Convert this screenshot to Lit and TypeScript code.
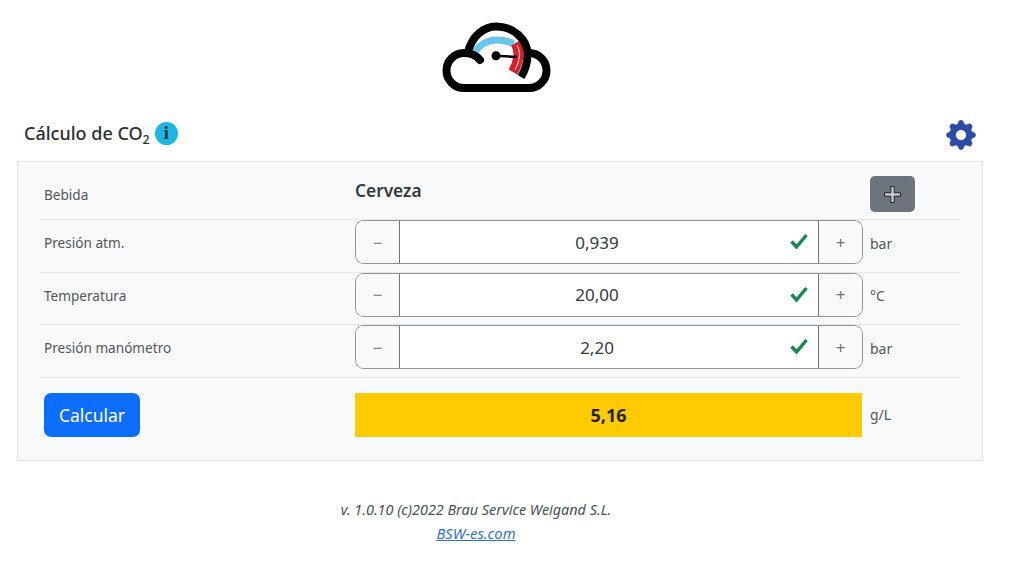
import { LitElement, html, css } from "lit";
import { customElement } from "lit/decorators.js";

const GEAR = "M9.405 1.05c-.413-1.4-2.397-1.4-2.81 0l-.1.34a1.464 1.464 0 0 1-2.105.872l-.31-.17c-1.283-.698-2.686.705-1.987 1.987l.169.311c.446.82.023 1.841-.872 2.105l-.34.1c-1.4.413-1.4 2.397 0 2.81l.34.1a1.464 1.464 0 0 1 .872 2.105l-.17.31c-.698 1.283.705 2.686 1.987 1.987l.311-.169a1.464 1.464 0 0 1 2.105.872l.1.34c.413 1.4 2.397 1.4 2.81 0l.1-.34a1.464 1.464 0 0 1 2.105-.872l.31.17c1.283.698 2.686-.705 1.987-1.987l-.169-.311a1.464 1.464 0 0 1 .872-2.105l.34-.1c1.4-.413 1.4-2.397 0-2.81l-.34-.1a1.464 1.464 0 0 1-.872-2.105l.17-.31c.698-1.283-.705-2.686-1.987-1.987l-.311.169a1.464 1.464 0 0 1-2.105-.872l-.1-.34zM8 10.93a2.929 2.929 0 1 1 0-5.86 2.929 2.929 0 0 1 0 5.858z";

@customElement("app-root")
export class AppRoot extends LitElement {
  static styles = css`
    :host {
      display: block;
      width: 1024px;
      height: 583px;
      overflow: hidden;
      background: #fff;
      color: #212529;
      font-family: "Noto Sans", "Open Sans", sans-serif;
    }
    .logo-wrap { display: flex; justify-content: center; padding: 22px 32px 0 0; height: 71px; }
    .head {
      display: flex; align-items: center; justify-content: space-between;
      height: 42px; margin-top: 21px; padding: 0 48px 0 24px;
    }
    .title { display: flex; align-items: center; gap: 5px; font-size: 18px; font-weight: 500; color: #2b2f33; margin-bottom: 4px; }
    .title sub { font-size: 12.5px; line-height: 0; vertical-align: -4px; }
    .info {
      width: 23px; height: 23px; border-radius: 50%; background: #1bb8e4;
      display: flex; align-items: center; justify-content: center;
      font-size: 16px; font-weight: 700; font-family: "DejaVu Serif", serif; color: #12384a;
    }
    .gear { width: 30px; height: 30px; fill: #2f4aa6; stroke: #2f4aa6; stroke-width: 0.25; display: block; }
    .card {
      margin: 5px 41px 0 17px; height: 300px; box-sizing: border-box;
      background: #f8f9fa; border: 1px solid #e2e5e8; padding: 14px 22px 0;
    }
    .row {
      display: grid; grid-template-columns: 315px 508px 97px; align-items: center;
      border-bottom: 1px solid #e4e7ea; padding-bottom: 7.5px;
    }
    .row.first { padding-bottom: 7px; }
    .row.last { border-bottom: 0; padding: 15px 0 0; }
    .label { padding-left: 4px; font-size: 13.6px; color: #50575e; }
    .unit { padding-left: 7px; font-size: 14px; color: #50575e; }
    .row.step-row .label { padding-top: 1px; }
    .row.step-row .unit { padding-top: 2px; }
    .drink { font-size: 17.3px; font-weight: 600; color: #343a40; margin-bottom: 8px; }
    .add {
      margin-left: 7px; width: 45px; height: 36px; border: 0; border-radius: 5px;
      background: #6c757d; padding: 0; display: flex; align-items: center; justify-content: center;
    }
    .add svg { width: 18px; height: 18px; display: block; }
    .group {
      display: grid; grid-template-columns: 43px 1fr 43px; height: 44px; box-sizing: border-box;
      border: 1px solid #8f9499; border-radius: 9px; overflow: hidden;
    }
    .step {
      border: 0; background: #f8f9fa; color: #6c757d; padding: 0;
      font: inherit; font-size: 17px; display: flex; align-items: center; justify-content: center;
    }
    .field {
      position: relative; display: flex; background: #fff;
      border-left: 1px solid #6f767c; border-right: 1px solid #6f767c;
      border-top: 1px solid #7fae98; border-bottom: 1px solid #7fae98; margin: -1px 0;
    }
    .field input {
      width: 100%; border: 0; outline: 0; background: transparent; text-align: center;
      font: inherit; font-size: 17px; color: #343a40; padding: 0 24px 0 0;
    }
    .check { position: absolute; right: 10px; top: 12px; width: 18px; height: 16px; }
    .calc {
      margin-left: 4px; width: 96px; height: 44px; border: 0; border-radius: 7px;
      background: #0d6efd; color: #fff; font: inherit; font-size: 17.5px; padding: 0;
    }
    .result {
      height: 44px; box-sizing: border-box; padding-top: 1px; margin-right: 1px; background: #ffcb00; display: flex; align-items: center; justify-content: center;
      font-weight: 700; font-size: 18px; color: #212529;
    }
    .foot { margin-top: 38px; padding-right: 72px; text-align: center; font-style: italic; font-size: 14.4px; line-height: 22px; color: #495057; }
    .foot a { display: block; margin-top: 1px; font-size: 14.8px; color: #2f74c4; text-decoration: underline; }
  `;

  private stepper(value: string, unit: string, label: string) {
    return html`<div class="row step-row">
      <div class="label">${label}</div>
      <div class="group">
        <button class="step">−</button>
        <div class="field">
          <input .value=${value} />
          <svg class="check" viewBox="0 0 18 16"><path d="M1.5 8.5l5 5.5L16.5 2" fill="none" stroke="#198754" stroke-width="3.4"/></svg>
        </div>
        <button class="step">+</button>
      </div>
      <div class="unit">${unit}</div>
    </div>`;
  }

  render() {
    return html`
      <div class="logo-wrap">
        <svg width="109" height="71" viewBox="0 0 109 71" fill="none">
          <path d="M33 30Q40 19 53 18Q64 17.500 71.500 22" stroke="#66c6ee" stroke-width="7"/>
          <path d="M73.500 21Q77 27 76.500 34Q75.500 42 71 50" stroke="#d81f26" stroke-width="10"/>
          <path d="M75 23Q78 29 77.500 34Q77 41 73 48" stroke="#f3c0c0" stroke-width="1.200"/>
          <path d="M38 38C34 33 29 31 22 31A17.500 17.500 0 0 0 22 66H87A17.500 17.500 0 0 0 87 31" stroke="#000" stroke-width="8" stroke-linecap="round"/>
          <path d="M26 30C30 14 42 4.500 54 4.500C72 4.500 85.500 18 85.500 32C85.500 40 84 47 79 55" stroke="#000" stroke-width="8"/>
          <circle cx="54" cy="33.700" r="4.500" fill="#000"/>
          <path d="M54 33.700L75 35" stroke="#000" stroke-width="2.600"/>
        </svg>
      </div>
      <div class="head">
        <div class="title"><span>Cálculo de CO<sub>2</sub></span><span class="info">i</span></div>
        <svg class="gear" viewBox="-.2 -.2 16.4 16.4"><path d="${GEAR}"/></svg>
      </div>
      <div class="card">
        <div class="row first">
          <div class="label">Bebida</div>
          <div class="drink">Cerveza</div>
          <button class="add">
            <svg viewBox="0.5 -0.5 18 18"><path d="M7.300 1h3.400v6.300H17v3.400h-6.300V17H7.300v-6.300H1V7.300h6.300z" fill="#c9cbcd" stroke="#1d1f21" stroke-width="1"/></svg>
          </button>
        </div>
        ${this.stepper("0,939", "bar", "Presión atm.")}
        ${this.stepper("20,00", "°C", "Temperatura")}
        ${this.stepper("2,20", "bar", "Presión manómetro")}
        <div class="row last">
          <div><button class="calc">Calcular</button></div>
          <div class="result">5,16</div>
          <div class="unit">g/L</div>
        </div>
      </div>
      <div class="foot">
        v. 1.0.10 (c)2022 Brau Service Weigand S.L.
        <a href="#">BSW-es.com</a>
      </div>
    `;
  }
}
